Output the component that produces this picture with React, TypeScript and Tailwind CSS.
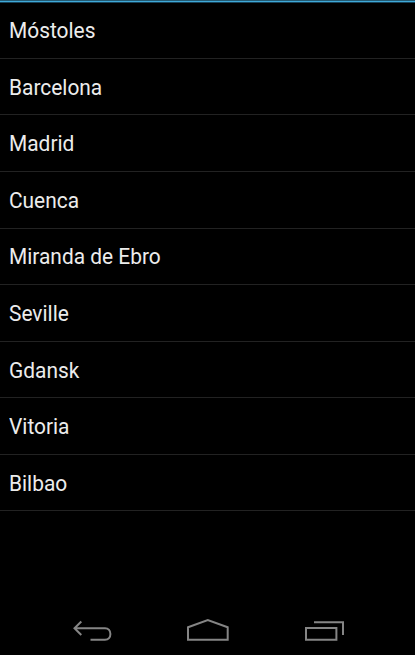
const cities = ["Móstoles", "Barcelona", "Madrid", "Cuenca", "Miranda de Ebro", "Seville", "Gdansk", "Vitoria", "Bilbao"];

export default function App() {
  return (
    <div className="flex h-[655px] w-[415px] flex-col overflow-hidden bg-black font-['Roboto',sans-serif] text-[#ececec]">
      <div className="h-[3px] shrink-0 border-b border-t border-b-[#174359] border-t-[#235a72] bg-[#3fa9d8]" />
      <ul className="-mt-[0.7px] flex-1">
        {cities.map((city) => (
          <li key={city} className="flex h-[56.55px] items-center border-b border-[#222222] px-[9px] pt-[1.4px] text-[22px]">
            <span className="origin-left scale-x-[0.95]">{city}</span>
          </li>
        ))}
      </ul>
      <nav className="flex h-[50px] shrink-0">
        <svg width="415" height="50" viewBox="0 605 415 50" fill="none" stroke="#858585" strokeWidth="2">
          <path d="M81.3 621.5L74.5 628.3L81.3 635M74.5 628.3H105C108.5 628.3 110.4 631 110.4 634C110.4 637 108.5 639.8 105 639.8H90.5" />
          <path d="M188 639.8V627.2L207.8 620L227.7 627.2V639.8Z" />
          <path d="M306 628H336.4V639.8H306ZM314 622.2H343V635" />
        </svg>
      </nav>
    </div>
  );
}
